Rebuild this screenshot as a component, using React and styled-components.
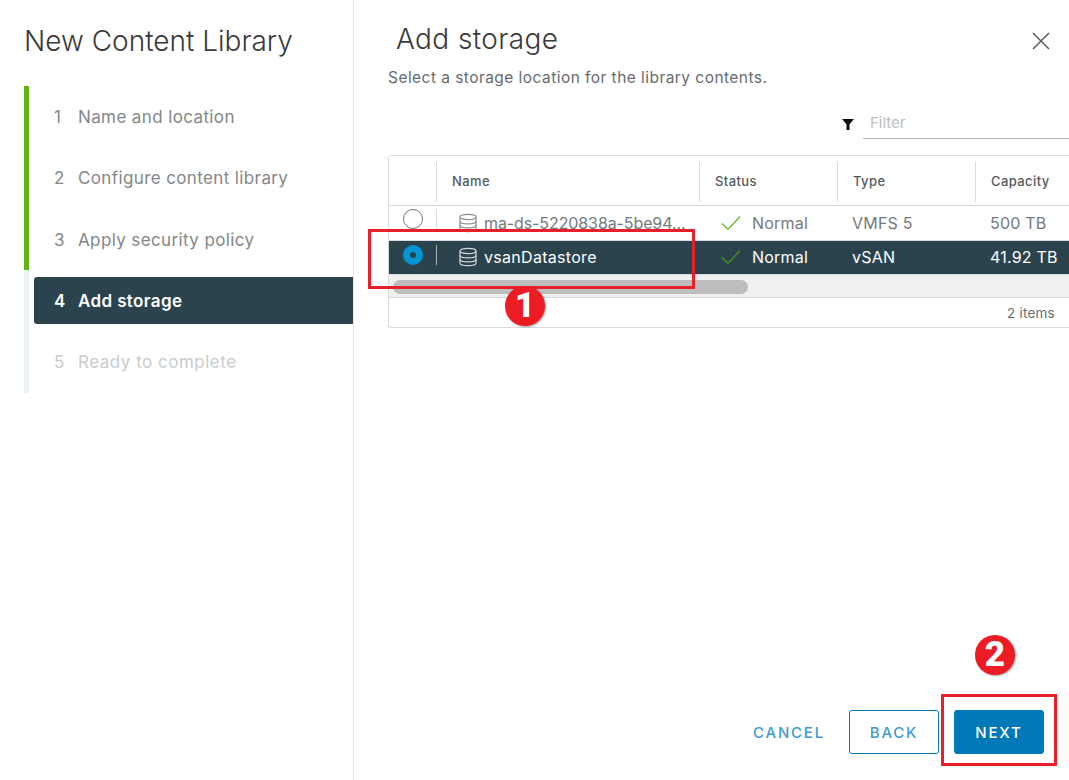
import React from 'react';
import styled, { createGlobalStyle } from 'styled-components';

const GlobalStyle = createGlobalStyle`
  html, body { margin: 0; padding: 0; background: #fff; }
  body { font-family: "Inter", "Liberation Sans", sans-serif; }
`;

const Page = styled.div`
  position: relative;
  display: flex;
  width: 1069px;
  height: 780px;
  overflow: hidden;
  background: #fff;
`;

const Sidebar = styled.aside`
  width: 354px;
  flex: none;
  box-sizing: border-box;
  border-right: 1px solid #e8e8e8;
  padding: 23px 0 0 24px;
`;

const SideTitle = styled.h1`
  margin: 0 0 27px;
  font-size: 28px;
  line-height: 36px;
  font-weight: 300;
  color: #3a3a3a;
  white-space: nowrap;
`;

const Steps = styled.ol`
  margin: 0;
  padding: 0;
  list-style: none;
  height: 307px;
  background: linear-gradient(#60b515 0 184px, #eef3f3 184px) left top / 5px 100% no-repeat;
  display: flex;
  flex-direction: column;
`;

const Step = styled.li`
  height: 47px;
  box-sizing: border-box;
  margin: 0 0 14.3px 10px;
  flex: none;
  border-radius: 3px 0 0 3px;
  display: flex;
  align-items: center;
  padding: 1px 0 0 20px;
  font-size: 17px;
  letter-spacing: ${p => (p.$disabled ? '0.5px' : '0.38px')};
  font-weight: ${p => (p.$active ? 600 : 400)};
  color: ${p => (p.$active ? '#fff' : p.$disabled ? '#c8cccd' : '#83878a')};
  background: ${p => (p.$active ? '#2b434d' : 'transparent')};
  &:first-child { margin-top: 7px; }
`;

const StepNum = styled.span`
  width: 24px;
  flex: none;
`;

const Main = styled.main`
  flex: 1;
  min-width: 0;
  padding: 21px 0 0 34px;
  display: flex;
  flex-direction: column;
`;

const TitleRow = styled.div`
  display: flex;
  justify-content: space-between;
  align-items: center;
  height: 36px;
  padding: 0 16px 0 8px;
`;

const Title = styled.h2`
  margin: 0;
  font-size: 28px;
  font-weight: 300;
  color: #3a3a3a;
  letter-spacing: 0.4px;
`;

const CloseIcon = styled.svg`
  width: 24px;
  height: 24px;
  margin-top: 4px;
  color: #5c6062;
`;

const Subtitle = styled.p`
  margin: 12px 0 0;
  font-size: 15.5px;
  line-height: 18px;
  letter-spacing: 0.45px;
  color: #676b6e;
  white-space: nowrap;
`;

const FilterRow = styled.div`
  display: flex;
  justify-content: flex-end;
  align-items: center;
  gap: 9px;
  height: 30px;
  margin-top: 22px;
`;

const FilterField = styled.div`
  width: 206px;
  height: 30px;
  box-sizing: border-box;
  border-bottom: 1px solid #b3b7b9;
  padding: 5px 0 0 7px;
  font-size: 15px;
  line-height: 18px;
  color: #bcc0c2;
`;

const Table = styled.div`
  margin-top: 16px;
  width: 720px;
  height: 173px;
  box-sizing: border-box;
  border: 1px solid #d8dadb;
  border-radius: 3px;
  display: flex;
  flex-direction: column;
`;

const Row = styled.div`
  display: grid;
  grid-template-columns: 47px 263px 138px 138px 1fr;
  flex: none;
  align-items: center;
  height: ${p => p.$h}px;
  padding-bottom: ${p => (p.$selected ? 2 : 0)}px;
  font-size: 16px;
  letter-spacing: 0.2px;
  color: ${p => (p.$selected ? '#fff' : '#75797c')};
  background: ${p => (p.$selected ? '#2b434d' : '#fff')};
  border-bottom: 1px solid #d8dadb;
  box-sizing: content-box;
`;

const HeadCell = styled.div`
  height: 40px;
  margin-top: 2px;
  display: flex;
  align-items: center;
  padding: 0 0 2px 15px;
  font-size: 13px;
  letter-spacing: 0.4px;
  font-weight: 500;
  color: #565a5d;
  border-left: ${p => (p.$plain ? 'none' : '1px solid #d8dadb')};
  box-sizing: border-box;
`;

const RadioCell = styled.div`
  display: flex;
  justify-content: flex-end;
  align-items: center;
  gap: 13px;
  margin-right: -1px;
  height: 100%;
  transform: translateY(${p => p.$shift}px);
`;

const Radio = styled.span`
  width: 20px;
  height: 20px;
  box-sizing: border-box;
  border-radius: 50%;
  flex: none;
  border: ${p => (p.$on ? '7.5px solid #0095d3' : '1px solid #737373')};
  background: ${p => (p.$on ? '#2b434d' : '#fff')};
`;

const Tick = styled.span`
  width: 1px;
  height: 20px;
  flex: none;
  background: ${p => (p.$selected ? '#a9b4b9' : '#d8dadb')};
`;

const NameCell = styled.div`
  display: flex;
  align-items: center;
  gap: 6px;
  padding-left: 22px;
  min-width: 0;
`;

const NameText = styled.span`
  white-space: nowrap;
  letter-spacing: ${p => (p.$long ? '-0.1px' : '0.3px')};
`;

const StatusCell = styled.div`
  display: flex;
  align-items: center;
  gap: 11px;
  padding-left: 22px;
`;

const Cell = styled.div`
  padding-left: 15px;
  white-space: nowrap;
`;

const ScrollTrack = styled.div`
  height: 23px;
  flex: none;
  box-sizing: border-box;
  background: #eef1f0;
  border-bottom: 1px solid #d8dadb;
  padding: 5px 0 0 4px;
`;

const ScrollThumb = styled.div`
  width: 355px;
  height: 14px;
  border-radius: 7px;
  background: #bdbdbd;
`;

const TableFooter = styled.div`
  flex: 1;
  display: flex;
  align-items: center;
  padding-left: 618px;
  font-size: 13.5px;
  letter-spacing: 0.2px;
  color: #696d70;
`;

const Footer = styled.div`
  margin-top: auto;
  margin-bottom: 26px;
  display: flex;
  justify-content: flex-end;
  align-items: center;
  padding-right: 25px;
`;

const Button = styled.button`
  width: 90px;
  height: 44px;
  box-sizing: border-box;
  border-radius: 3px;
  font: 500 15px "Inter", "Liberation Sans", sans-serif;
  letter-spacing: 1.8px;
  border: 1px solid ${p => (p.$kind === 'link' ? 'transparent' : '#0079b8')};
  color: ${p => (p.$kind === 'primary' ? '#fff' : '#3d9bce')};
  background: ${p => (p.$kind === 'primary' ? '#0079b8' : '#fff')};
  margin-left: ${p => (p.$kind === 'primary' ? 15 : 0)}px;
  margin-right: ${p => (p.$kind === 'link' ? 15 : 0)}px;
  padding: 0;
`;

const Callout = styled.div`
  position: absolute;
  left: ${p => p.$x}px;
  top: ${p => p.$y}px;
  width: ${p => p.$w}px;
  height: ${p => p.$h}px;
  box-sizing: border-box;
  border: 3px solid #e8202c;
  pointer-events: none;
`;

const Badge = styled.div`
  position: absolute;
  left: ${p => p.$x}px;
  top: ${p => p.$y}px;
  width: 40px;
  height: 40px;
  border-radius: 50%;
  background: #ed1c24;
  box-shadow: 1px 1px 2px rgba(0, 0, 0, 0.35);
  color: #fff;
  font: 900 35px/40px "Roboto", "Liberation Sans", sans-serif;
  text-align: center;
`;

const Database = ({ color }) => (
  <svg width="20" height="20" viewBox="0 0 20 20" fill="none" stroke={color} strokeWidth="1.2">
    <ellipse cx="10" cy="4" rx="8" ry="2.6" />
    <path d="M2 4v12c0 1.5 3.6 2.6 8 2.6s8-1.1 8-2.6V4" />
    <path d="M2 8.2c0 1.5 3.6 2.6 8 2.6s8-1.1 8-2.6" />
    <path d="M2 12.2c0 1.5 3.6 2.6 8 2.6s8-1.1 8-2.6" />
  </svg>
);

const Check = ({ color }) => (
  <svg width="20" height="16" viewBox="0 0 20 16" fill="none" stroke={color} strokeWidth="1.2">
    <path d="M1 8.5l6 6L19 1.5" />
  </svg>
);

const steps = [
  ['1', 'Name and location'],
  ['2', 'Configure content library'],
  ['3', 'Apply security policy'],
  ['4', 'Add storage', 'active'],
  ['5', 'Ready to complete', 'disabled'],
];

const App = () => {
  return (
    <Page>
      <GlobalStyle />
      <Sidebar>
        <SideTitle>New Content Library</SideTitle>
        <Steps>
          {steps.map(([n, label, state]) => (
            <Step key={n} $active={state === 'active'} $disabled={state === 'disabled'}>
              <StepNum>{n}</StepNum>
              {label}
            </Step>
          ))}
        </Steps>
      </Sidebar>
      <Main>
        <TitleRow>
          <Title>Add storage</Title>
          <CloseIcon viewBox="0 0 24 24" fill="none" stroke="currentColor" strokeWidth="1.6">
            <path d="M4 4l16 16M20 4L4 20" />
          </CloseIcon>
        </TitleRow>
        <Subtitle>Select a storage location for the library contents.</Subtitle>
        <FilterRow>
          <svg width="12" height="11" viewBox="0 0 12 11" fill="#111">
            <path d="M0 0h12L7.5 5.5V11h-3V5.5z" />
          </svg>
          <FilterField>Filter</FilterField>
        </FilterRow>
        <Table>
          <Row $h={49}>
            <HeadCell $plain />
            <HeadCell>Name</HeadCell>
            <HeadCell>Status</HeadCell>
            <HeadCell>Type</HeadCell>
            <HeadCell>Capacity</HeadCell>
          </Row>
          <Row $h={34}>
            <RadioCell $shift={-4}>
              <Radio />
              <Tick />
            </RadioCell>
            <NameCell>
              <Database color="#8a8e90" />
              <NameText $long>ma-ds-5220838a-5be94...</NameText>
            </NameCell>
            <StatusCell>
              <Check color="#60b515" />
              Normal
            </StatusCell>
            <Cell>VMFS 5</Cell>
            <Cell>500 TB</Cell>
          </Row>
          <Row $h={31} $selected>
            <RadioCell $shift={-2}>
              <Radio $on />
              <Tick $selected />
            </RadioCell>
            <NameCell>
              <Database color="#d5dbdd" />
              <NameText>vsanDatastore</NameText>
            </NameCell>
            <StatusCell>
              <Check color="#4f9a1c" />
              Normal
            </StatusCell>
            <Cell>vSAN</Cell>
            <Cell>41.92 TB</Cell>
          </Row>
          <ScrollTrack>
            <ScrollThumb />
          </ScrollTrack>
          <TableFooter>2 items</TableFooter>
        </Table>
        <Footer>
          <Button $kind="link">CANCEL</Button>
          <Button>BACK</Button>
          <Button $kind="primary">NEXT</Button>
        </Footer>
      </Main>
      <Callout $x={368} $y={229} $w={327} $h={60} />
      <Callout $x={941} $y={694} $w={116} $h={72} />
      <Badge $x={505} $y={286}>1</Badge>
      <Badge $x={975} $y={635}>2</Badge>
    </Page>
  );
};

export default App;
